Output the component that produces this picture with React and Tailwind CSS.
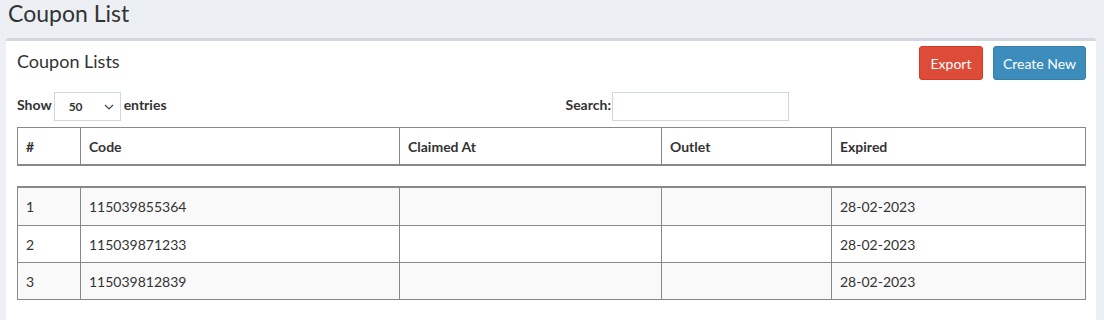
import React from "react";

const rows = [
  ["1", "115039855364", "", "", "28-02-2023"],
  ["2", "115039871233", "", "", "28-02-2023"],
  ["3", "115039812839", "", "", "28-02-2023"],
];

const widths = ["w-[63px]", "w-[319px]", "w-[262px]", "w-[170px]", "w-[253px]"];

export default function App() {
  return (
    <div className="w-[1104px] h-[320px] overflow-hidden bg-[#ecf0f5] text-[#333] font-['Lato',sans-serif]">
      <div className="h-[38px] pl-[8px] pt-[2px]">
        <h1 className="text-[23px] leading-[22px] font-normal">Coupon List</h1>
      </div>
      <div className="ml-[6px] w-[1090px] h-[282px] bg-white border-t-[3px] border-[#d2d6de] rounded-t-[3px]">
        <div className="flex items-start justify-between pl-[11px] pr-[10px] pt-[5px]">
          <h3 className="text-[18px] leading-[20px] pt-[5px] font-normal">Coupon Lists</h3>
          <div className="flex gap-[10px]">
            <button className="h-[34px] w-[64px] rounded-[3px] bg-[#dd4b39] border border-[#d73925] text-white text-[14px]">Export</button>
            <button className="h-[34px] w-[93px] rounded-[3px] bg-[#3c8dbc] border border-[#367fa9] text-white text-[14px]">Create New</button>
          </div>
        </div>
        <div className="flex items-center pl-[11px] mt-[12px] h-[29px]">
          <span className="text-[14px] font-bold leading-[16px] -mt-[3px]">Show</span>
          <div className="ml-[2px] h-[29px] w-[67px] border border-[#d2d6de] flex items-center justify-between pl-[14px] pr-[6px]">
            <span className="text-[12px] font-bold">50</span>
            <svg width="10" height="6" viewBox="0 0 10 6" fill="none" stroke="#444" strokeWidth="1.2">
              <path d="M1 1l4 4 4-4" />
            </svg>
          </div>
          <span className="ml-[3px] text-[14px] font-bold leading-[16px] -mt-[3px]">entries</span>
          <div className="ml-auto flex items-center mr-[307px]">
            <span className="text-[14px] font-bold leading-[16px] -mt-[3px]">Search:</span>
            <div className="ml-[1px] h-[29px] w-[177px] border border-[#d2d6de]" />
          </div>
        </div>
        <div className="ml-[11px] mt-[6px] w-[1069px] text-[14px]">
          <div className="flex border-l border-r border-t border-b-2 border-[#888]">
            {["#", "Code", "Claimed At", "Outlet", "Expired"].map((h, i) => (
              <div
                key={h}
                className={`${widths[i]} h-[36px] flex items-center pl-[8px] font-bold ${i < 4 ? "border-r border-[#888]" : ""}`}
              >
                {h}
              </div>
            ))}
          </div>
          <div className="mt-[20px] border-l border-r border-t-2 border-[#888]">
            {rows.map((r, ri) => (
              <div key={ri} className={`flex border-b border-[#888] ${ri % 2 === 0 ? "bg-[#f9f9f9]" : "bg-white"}`}>
                {r.map((c, i) => (
                  <div
                    key={i}
                    className={`${widths[i]} ${ri === 0 ? "h-[37px]" : "h-[36px]"} flex items-center pl-[8px] ${i < 4 ? "border-r border-[#888]" : ""}`}
                  >
                    {c}
                  </div>
                ))}
              </div>
            ))}
          </div>
        </div>
      </div>
    </div>
  );
}
